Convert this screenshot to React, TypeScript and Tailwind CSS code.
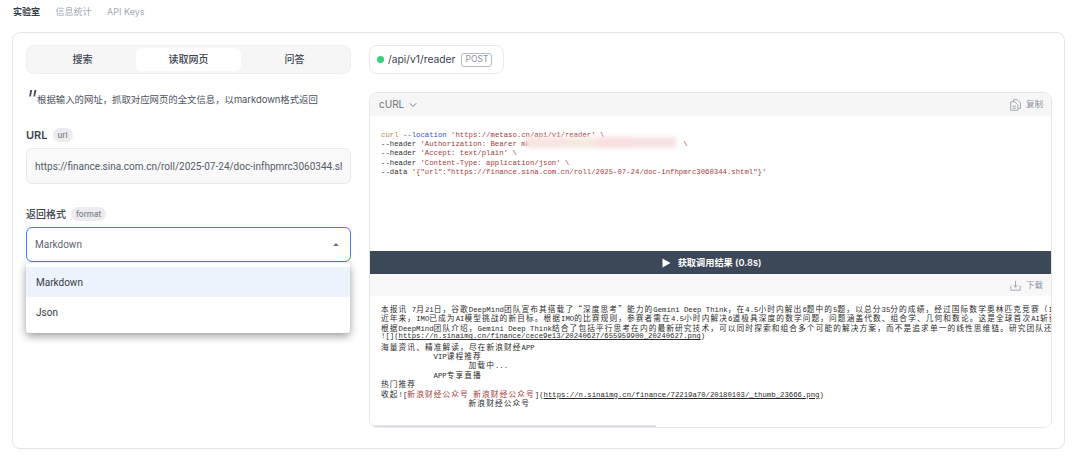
import type { ReactNode } from 'react';
import { ChevronDown } from 'lucide-react';

const SANS = "font-['Inter','Noto_Sans_CJK_SC',sans-serif]";

// latin stays on the mono grid, CJK runs get stretched to two cells
function Mono({ text }: { text: string }) {
  const parts = text.split(/([\u2E80-\uFFEF“”]+)/);
  return (
    <>
      {parts.map((p, i) =>
        /[\u2E80-\uFFEF“”]/.test(p) ? (
          <span key={i} className="font-['Noto_Sans_CJK_SC',monospace] tracking-[1.1px] text-[7.7px]">{p}</span>
        ) : (
          <span key={i}>{p}</span>
        ),
      )}
    </>
  );
}

// fixed height, the CJK font would otherwise push the line box open
function Line({ children }: { children: ReactNode }) {
  return <div className="h-[9.400px]">{children}</div>;
}

function FileIcon() {
  return (
    <svg width="11" height="12" viewBox="0 0 11 12" fill="none" stroke="#9ca3af" strokeWidth="0.9">
      <path d="M3.500 2.500V.8h4l3 3v5.500H8.200" />
      <path d="M.7 2.800h4.200l3 3v5.500H.7z" />
      <path d="M2.500 7.200h3.400M2.500 9.200h3.400" />
    </svg>
  );
}

function DownloadIcon() {
  return (
    <svg width="11" height="11" viewBox="0 0 11 11" fill="none" stroke="#9ca3af" strokeWidth="0.9">
      <path d="M.8 5.500v4.700h9.400V5.500" />
      <path d="M5.500 .8v6.400M3.300 5l2.200 2.200L7.700 5" />
    </svg>
  );
}

const resultLines = [
  '本报讯 7月21日，谷歌DeepMind团队宣布其搭载了“深度思考”能力的Gemini Deep Think，在4.5小时内解出6题中的5题，以总分35分的成绩，经过国际数学奥林匹克竞赛（IMO）',
  '近年来，IMO已成为AI模型挑战的新目标。根据IMO的比赛规则，参赛者需在4.5小时内解决6道极具深度的数学问题，问题涵盖代数、组合学、几何和数论。这是全球首次AI斩获金牌',
  '根据DeepMind团队介绍，Gemini Deep Think结合了包括平行思考在内的最新研究技术，可以同时探索和组合多个可能的解决方案，而不是追求单一的线性思维链。研究团队还表示',
];

export default function App() {
  return (
    <div className={`w-[1080px] h-[468px] overflow-hidden bg-white ${SANS}`}>
      {/* top nav */}
      <div className="h-[32px] pl-[13px] pb-[9px] flex items-center gap-[15.500px] text-[9px]">
        <span className="font-semibold text-[#333b47]">实验室</span>
        <span className="text-[#a3a9b3]">信息统计</span>
        <span className="text-[#a3a9b3]">API Keys</span>
      </div>

      <div className="ml-[12px] w-[1053px] h-[417px] border border-[#e3e5ec] rounded-lg px-[13px] pt-[12px] flex gap-[18px]">
        {/* left column */}
        <div className="w-[325px] shrink-0 relative">
          <div className="h-[29px] rounded-lg border border-[#eeeff1] bg-[#f6f6f7] px-[2px] py-[2px] flex text-[10px] font-medium text-[#3d4450]">
            <div className="w-[107px] flex items-center justify-center">搜索</div>
            <div className="w-[105px] flex items-center justify-center bg-white rounded-md">读取网页</div>
            <div className="w-[107px] flex items-center justify-center">问答</div>
          </div>

          <div className="mt-[19px] h-[14px] flex text-[#4a515c] text-[9.400px] pl-[3px]">
            <svg width="8" height="7" viewBox="0 0 8 7" className="mt-[-3px]" fill="#4a515c">
              <path d="M1.200 0h2L1.900 6.600H.2zM5.400 0h2L6.100 6.600H4.400z" />
            </svg>
            <span className="leading-[14px]">根据输入的网址，抓取对应网页的全文信息，以markdown格式返回</span>
          </div>

          <div className="mt-[21px] flex items-center gap-[5px]">
            <span className="text-[11px] font-semibold text-[#3d4450] leading-[14px]">URL</span>
            <span className="h-[14px] px-[5px] rounded-full bg-[#ececee] text-[8px] font-medium text-[#7a818c] leading-[14px]">url</span>
          </div>
          <div className="mt-[6px] h-[36px] rounded-md border border-[#e8e9ec] bg-[#f9f9fa] px-[8px] flex items-center overflow-hidden">
            <span className="font-['Roboto',sans-serif] text-[10px] text-[#555c67] whitespace-nowrap overflow-hidden">https://finance.sina.com.cn/roll/2025-07-24/doc-infhpmrc3060344.shtml</span>
          </div>

          <div className="mt-[23px] flex items-center gap-[5px]">
            <span className="text-[10px] font-medium text-[#3d4450] leading-[14px]">返回格式</span>
            <span className="h-[14px] px-[5px] rounded-full bg-[#ececee] text-[8px] font-medium text-[#7a818c] leading-[14px]">format</span>
          </div>
          <div className="mt-[6px] h-[35px] rounded-md border border-[#3b82f6] bg-white pl-[8px] pr-[11px] flex items-center justify-between">
            <span className="font-['Roboto',sans-serif] text-[10px] text-[#5d6470]">Markdown</span>
            <span className="w-0 h-0 border-x-[3px] border-x-transparent border-b-[3.500px] border-b-[#6b7280]" />
          </div>

          {/* dropdown menu */}
          <div className="absolute left-0 top-[218px] w-[324px] h-[70px] bg-white rounded-[3px] pt-[4px] shadow-[0_3px_8px_rgba(0,0,0,0.4)] font-['Roboto',sans-serif] text-[10px] text-[#333b47]">
            <div className="h-[30px] pl-[10px] flex items-center bg-[#edf3fd]">Markdown</div>
            <div className="h-[30px] pl-[10px] flex items-center">Json</div>
          </div>
        </div>

        {/* right column */}
        <div className="w-[683px] shrink-0">
          <div className="w-[135px] h-[29px] rounded-lg border border-[#e8e9ec] flex items-center pl-[7px]">
            <span className="w-[7px] h-[7px] rounded-full bg-[#34d27b]" />
            <span className="ml-[4px] text-[10.300px] text-[#3d4450]">/api/v1/reader</span>
            <span className="ml-[6px] w-[31px] h-[14px] rounded-[3px] border border-[#b4bac4] text-[8.500px] text-[#8a919c] flex items-center justify-center">POST</span>
          </div>

          <div className="mt-[18px] h-[336px] rounded-lg border border-[#e6e7ea] flex flex-col overflow-hidden relative">
            <div className="h-[23px] shrink-0 bg-[#f6f6f6] flex items-center justify-between pl-[9px] pr-[8px]">
              <span className="flex items-center gap-[3px] text-[10px] text-[#6b7280]">
                cURL <ChevronDown size={12} strokeWidth={1.800} />
              </span>
              <span className="flex items-center gap-[5px] text-[8.500px] text-[#8a919c]">
                <FileIcon />
                复制
              </span>
            </div>

            <div className="h-[135px] shrink-0 bg-white pl-[11px] pt-[14.500px] font-['Liberation_Mono',monospace] text-[7.300px] leading-[9.400px] text-[#2f2f2f] whitespace-pre relative">
              <div><span className="text-[#b8893a]">curl</span> <span className="text-[#2f55d4]">--location</span> <span className="text-[#a33b3b]">'https://metaso.cn/api/v1/reader'</span> <span className="text-[#a33b3b]">\</span></div>
              <div>--header <span className="text-[#a33b3b]">'Authorization: Bearer mk</span>                                   <span className="text-[#a33b3b]">\</span></div>
              <div>--header <span className="text-[#a33b3b]">'Accept: text/plain'</span> <span className="text-[#a33b3b]">\</span></div>
              <div>--header <span className="text-[#a33b3b]">'Content-Type: application/json'</span> <span className="text-[#a33b3b]">\</span></div>
              <div>--data <span className="text-[#a33b3b]">'{'{'}"url":"https://finance.sina.com.cn/roll/2025-07-24/doc-infhpmrc3060344.shtml"{'}'}'</span></div>
              {/* blurred api key */}
              <div className="absolute left-[156px] top-[21px] w-[150px] h-[11px] blur-[2px] flex">
                <div className="w-[40px] bg-[#f8e4e0]" />
                <div className="w-[30px] bg-[#f6eadf]" />
                <div className="w-[35px] bg-[#f9dfdf]" />
                <div className="w-[45px] bg-[#f7e2e2]" />
              </div>
            </div>

            <div className="h-[23px] shrink-0 bg-[#3c4858] flex items-center justify-center gap-[7px] pl-[2px] text-white text-[9.200px] font-semibold">
              <svg width="9" height="10" viewBox="0 0 9 10" fill="#fff"><path d="M.5 .5 8.500 5 .5 9.500z" /></svg>
              获取调用结果 (0.8s)
            </div>

            <div className="h-[22px] shrink-0 bg-[#f8f8f8] flex items-center justify-end gap-[5px] pr-[8px] text-[8.500px] text-[#8a919c]">
              <DownloadIcon />
              下载
            </div>

            <div className="flex-1 min-h-0 bg-white pl-[11px] pt-[8px] font-['Liberation_Mono','Noto_Sans_CJK_SC',monospace] text-[7.300px] leading-[9.400px] text-[#2b2b2b] whitespace-pre overflow-hidden">
              {resultLines.map((l) => (
                <Line key={l}><Mono text={l} /></Line>
              ))}
              <Line>![](<span className="underline">https://n.sinaimg.cn/finance/cece9e13/20240627/655959900_20240627.png</span>)</Line>
              <Line><Mono text="海量资讯、精准解读，尽在新浪财经APP" /></Line>
              <Line>{'            '}<Mono text="VIP课程推荐" /></Line>
              <Line>{'                    '}<Mono text="加载中..." /></Line>
              <Line>{'            '}<Mono text="APP专享直播" /></Line>
              <Line><Mono text="热门推荐" /></Line>
              <Line><Mono text="收起!" />[<span className="text-[#a33b3b]"><Mono text="新浪财经公众号 新浪财经公众号" /></span>](<span className="underline">https://n.sinaimg.cn/finance/72219a70/20180103/_thumb_23666.png</span>)</Line>
              <Line>{'                    '}<Mono text="新浪财经公众号" /></Line>
            </div>

            {/* horizontal scrollbar thumb */}
            <div className="absolute left-0 bottom-0 w-[286px] h-[2px] bg-[#dfe0e3]" />
          </div>
        </div>
      </div>
    </div>
  );
}
